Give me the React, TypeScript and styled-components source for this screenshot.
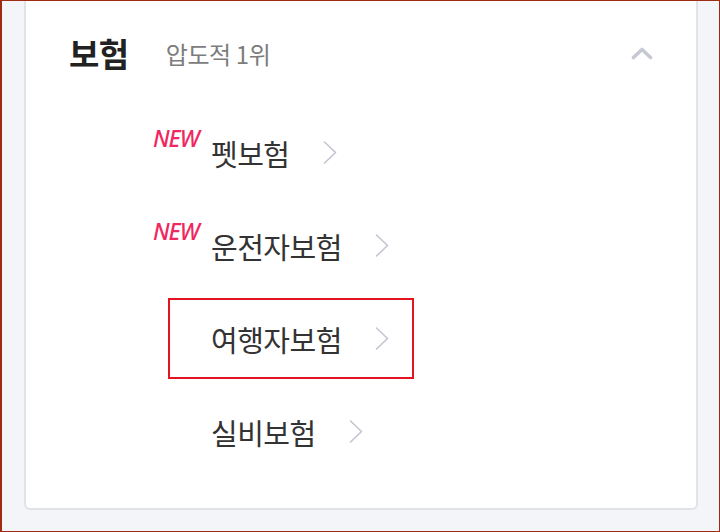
import * as React from 'react'
import styled, { createGlobalStyle } from 'styled-components'

interface Product {
  name: string
  isNew?: boolean
  highlighted?: boolean
}

const products: Product[] = [
  { name: '펫보험', isNew: true },
  { name: '운전자보험', isNew: true },
  { name: '여행자보험', highlighted: true },
  { name: '실비보험' },
]

const GlobalStyle = createGlobalStyle`
  html, body {
    margin: 0;
    padding: 0;
    background: #ffffff;
  }
  body {
    font-family: "Noto Sans CJK KR", "Noto Sans", sans-serif;
  }
`

const Frame = styled.div`
  box-sizing: border-box;
  width: 720px;
  height: 532px;
  border: 1px solid #9e2b12;
  border-left-width: 2px;
  background: #f4f5f9;
  padding: 0 21px 21px 22px;
  display: flex;
  flex-direction: column;
`

const Card = styled.section`
  flex: 1;
  display: flex;
  flex-direction: column;
  background: #ffffff;
  border: 2px solid #e1e3e8;
  border-top: none;
  border-radius: 0 0 6px 6px;
`

const Header = styled.header`
  height: 104px;
  display: flex;
  align-items: center;
  padding: 0 43px 0 43px;
`

const Title = styled.h2`
  margin: 0;
  font-size: 33px;
  font-weight: 700;
  color: #222222;
  letter-spacing: -0.5px;
`

const Subtitle = styled.span`
  margin-left: 37px;
  font-size: 24px;
  font-weight: 400;
  color: #7c7c7c;
  letter-spacing: -0.4px;
  flex: 1;
`

const Toggle = styled.button`
  border: none;
  background: none;
  padding: 0;
  display: flex;
  cursor: pointer;
`

const List = styled.ul`
  list-style: none;
  margin: 0;
  padding: 7px 0 0 142px;
  display: flex;
  flex-direction: column;
  align-items: flex-start;
  gap: 12px;
`

const Item = styled.li<{ $highlighted?: boolean }>`
  position: relative;
  box-sizing: border-box;
  height: 81px;
  display: flex;
  align-items: center;
  padding: 0 23px 0 41px;
  border: 2px solid ${p => (p.$highlighted ? '#e3141f' : 'transparent')};
`

const Name = styled.span`
  font-size: 29px;
  font-weight: 400;
  color: #333333;
  letter-spacing: -0.5px;
  margin-right: 33px;
`

const NewBadge = styled.span`
  position: absolute;
  left: -17px;
  top: 8px;
  font-family: "Noto Sans", "Liberation Sans", sans-serif;
  font-size: 23px;
  font-style: italic;
  font-weight: 500;
  letter-spacing: -1px;
  color: #f0285f;
`

const ChevronUp = () => (
  <svg width="22" height="13" viewBox="0 0 22 13" fill="none">
    <path
      d="M2.5 10.5L11 2.5L19.5 10.5"
      stroke="#c6c8d3"
      strokeWidth="3.6"
      strokeLinecap="round"
      strokeLinejoin="round"
    />
  </svg>
)

const ChevronRight = () => (
  <svg width="14" height="23" viewBox="0 0 14 23" fill="none">
    <path
      d="M1.5 1L12.5 11.5L1.5 22"
      stroke="#c3c5d0"
      strokeWidth="1.6"
      strokeLinecap="round"
      strokeLinejoin="round"
    />
  </svg>
)

export default function App() {
  return (
    <>
      <GlobalStyle />
      <Frame>
        <Card>
          <Header>
            <Title>보험</Title>
            <Subtitle>압도적 1위</Subtitle>
            <Toggle aria-label="접기">
              <ChevronUp />
            </Toggle>
          </Header>
          <List>
            {products.map(product => (
              <Item key={product.name} $highlighted={product.highlighted}>
                {product.isNew && <NewBadge>NEW</NewBadge>}
                <Name>{product.name}</Name>
                <ChevronRight />
              </Item>
            ))}
          </List>
        </Card>
      </Frame>
    </>
  )
}
